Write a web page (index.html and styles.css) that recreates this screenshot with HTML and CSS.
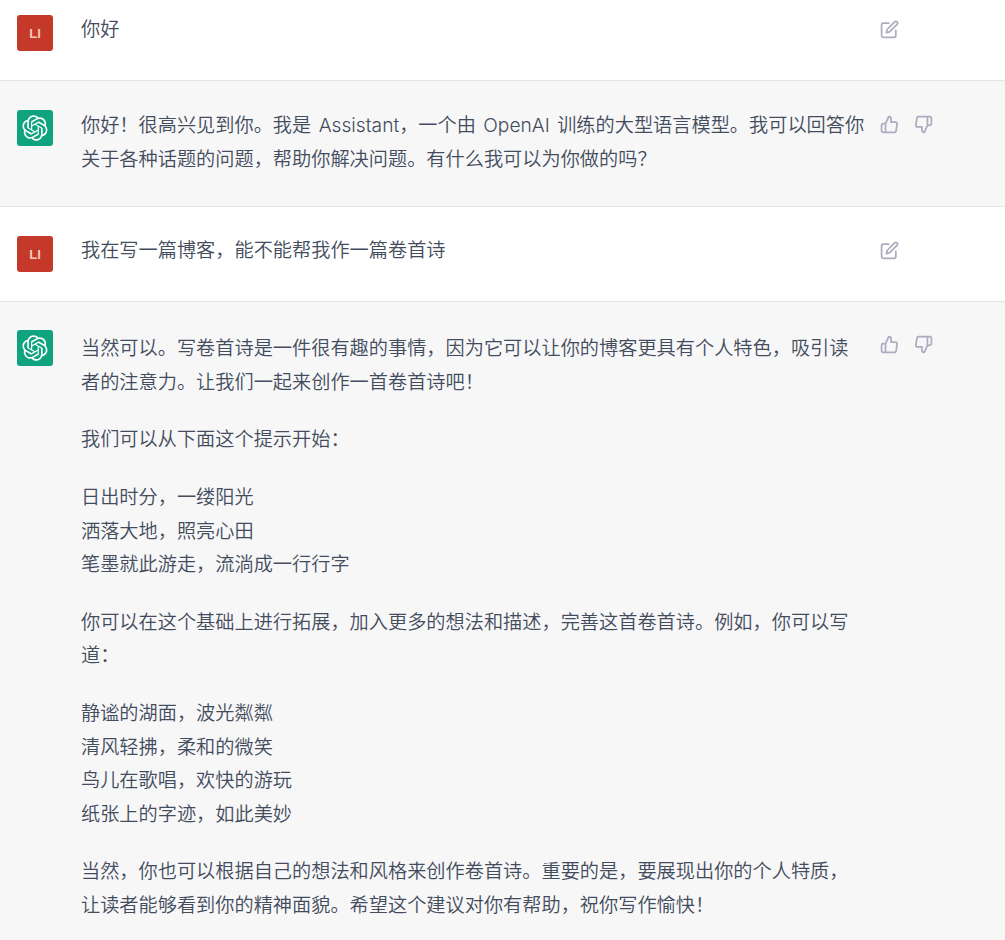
FILE: index.html
```html
<!DOCTYPE html>
<html lang="zh-CN">
<head>
<meta charset="utf-8">
<title>Chat</title>
<link rel="stylesheet" href="styles.css">
</head>
<body>
<svg class="defs" width="0" height="0" aria-hidden="true">
  <symbol id="logo" viewBox="0 0 41 41"><path fill="currentColor" d="M37.5324 16.8707C37.9808 15.5241 38.1363 14.0974 37.9886 12.6859C37.8409 11.2744 37.3934 9.91076 36.676 8.68622C35.6126 6.83404 33.9882 5.3676 32.0373 4.4985C30.0864 3.62941 27.9098 3.40259 25.8215 3.85078C24.8796 2.7893 23.7219 1.94125 22.4257 1.36341C21.1295 0.785575 19.7249 0.491269 18.3058 0.500197C16.1708 0.495044 14.0893 1.16803 12.3614 2.42214C10.6335 3.67624 9.34853 5.44666 8.6917 7.47815C7.30085 7.76286 5.98686 8.3414 4.8377 9.17505C3.68854 10.0087 2.73073 11.0782 2.02839 12.312C0.956464 14.1591 0.498905 16.2988 0.721698 18.4228C0.944492 20.5467 1.83612 22.5449 3.268 24.1293C2.81966 25.4759 2.66413 26.9026 2.81182 28.3141C2.95951 29.7256 3.40701 31.0892 4.12437 32.3138C5.18791 34.1659 6.8123 35.6322 8.76321 36.5013C10.7141 37.3704 12.8907 37.5973 14.9789 37.1492C15.9208 38.2107 17.0786 39.0587 18.3747 39.6366C19.6709 40.2144 21.0755 40.5087 22.4946 40.4998C24.6307 40.5054 26.7133 39.8321 28.4418 38.5772C30.1704 37.3223 31.4556 35.5506 32.1119 33.5179C33.5027 33.2332 34.8167 32.6547 35.9659 31.821C37.115 30.9874 38.0728 29.9178 38.7752 28.684C39.8458 26.8371 40.3023 24.6979 40.0789 22.5748C39.8556 20.4517 38.9639 18.4544 37.5324 16.8707ZM22.4978 37.8849C20.7443 37.8874 19.0459 37.2733 17.6994 36.1501C17.7601 36.117 17.8666 36.0586 17.936 36.0161L25.9004 31.4156C26.1003 31.3019 26.2663 31.137 26.3813 30.9378C26.4964 30.7386 26.5563 30.5124 26.5549 30.2825V19.0542L29.9213 20.998C29.9389 21.0068 29.9541 21.0198 29.9656 21.0359C29.977 21.052 29.9842 21.0707 29.9867 21.0902V30.3889C29.9842 32.375 29.1946 34.2791 27.7909 35.6841C26.3872 37.0892 24.4838 37.8806 22.4978 37.8849ZM6.39227 31.0064C5.51397 29.4888 5.19742 27.7107 5.49804 25.9832C5.55718 26.0187 5.66048 26.0818 5.73461 26.1244L13.699 30.7248C13.8975 30.8408 14.1233 30.902 14.3532 30.902C14.583 30.902 14.8088 30.8408 15.0073 30.7248L24.731 25.1103V28.9979C24.7321 29.0177 24.7283 29.0376 24.7199 29.0556C24.7115 29.0736 24.6988 29.0893 24.6829 29.1012L16.6317 33.7497C14.9096 34.7416 12.8643 35.0097 10.9447 34.4954C9.02506 33.9811 7.38785 32.7263 6.39227 31.0064ZM4.29707 13.6194C5.17156 12.0998 6.55279 10.9364 8.19885 10.3327C8.19885 10.4013 8.19491 10.5228 8.19491 10.6071V19.808C8.19351 20.0378 8.25334 20.2638 8.36823 20.4629C8.48312 20.6619 8.64893 20.8267 8.84863 20.9404L18.5723 26.5542L15.206 28.4979C15.1894 28.5089 15.1703 28.5155 15.1505 28.5173C15.1307 28.5191 15.1107 28.516 15.0924 28.5082L7.04046 23.8557C5.32135 22.8601 4.06716 21.2235 3.55289 19.3046C3.03862 17.3858 3.30624 15.3413 4.29707 13.6194ZM31.955 20.0556L22.2312 14.4411L25.5976 12.4981C25.6142 12.4872 25.6333 12.4805 25.6531 12.4787C25.6729 12.4769 25.6928 12.4801 25.7111 12.4879L33.7631 17.1364C34.9967 17.849 36.0017 18.8982 36.6606 20.1613C37.3194 21.4244 37.6047 22.849 37.4832 24.2684C37.3617 25.6878 36.8382 27.0432 35.9743 28.1759C35.1103 29.3086 33.9415 30.1717 32.6047 30.6641C32.6047 30.5947 32.6047 30.4733 32.6047 30.3889V21.188C32.6066 20.9586 32.5474 20.7328 32.4332 20.5338C32.319 20.3348 32.154 20.1698 31.955 20.0556ZM35.3055 15.0128C35.2464 14.9765 35.1431 14.9142 35.069 14.8717L27.1045 10.2712C26.906 10.1554 26.6803 10.0943 26.4504 10.0943C26.2206 10.0943 25.9948 10.1554 25.7963 10.2712L16.0726 15.8858V11.9982C16.0715 11.9783 16.0753 11.9585 16.0837 11.9405C16.0921 11.9225 16.1048 11.9068 16.1207 11.8949L24.1719 7.25025C25.4053 6.53903 26.8158 6.19376 28.2383 6.25482C29.6608 6.31589 31.0364 6.78077 32.2044 7.59508C33.3723 8.40939 34.2842 9.53945 34.8334 10.8531C35.3826 12.1667 35.5464 13.6095 35.3055 15.0128ZM14.2424 21.9419L10.8752 19.9981C10.8576 19.9893 10.8423 19.9763 10.8309 19.9602C10.8195 19.9441 10.8122 19.9254 10.8098 19.9058V10.6071C10.8107 9.18295 11.2173 7.78848 11.9819 6.58696C12.7466 5.38544 13.8377 4.42659 15.1275 3.82264C16.4173 3.21869 17.8524 2.99464 19.2649 3.1767C20.6775 3.35876 22.0089 3.93941 23.1034 4.85067C23.0427 4.88379 22.937 4.94215 22.8668 4.98473L14.9024 9.58517C14.7025 9.69878 14.5366 9.86356 14.4215 10.0626C14.3065 10.2616 14.2466 10.4877 14.2479 10.7175L14.2424 21.9419ZM16.071 17.9991L20.4018 15.4978L24.7325 17.9975V22.9985L20.4018 25.4983L16.071 22.9985V17.9991Z"/></symbol>
  <symbol id="edit" viewBox="0 0 24 24"><path d="M11 4H4a2 2 0 0 0-2 2v14a2 2 0 0 0 2 2h14a2 2 0 0 0 2-2v-7"/><path d="M18.5 2.5a2.121 2.121 0 0 1 3 3L12 15l-4 1 1-4 9.5-9.5z"/></symbol>
  <symbol id="up" viewBox="0 0 24 24"><path d="M14 9V5a3 3 0 0 0-3-3l-4 9v11h11.28a2 2 0 0 0 2-1.7l1.38-9a2 2 0 0 0-2-2.3zM7 22H4a2 2 0 0 1-2-2v-7a2 2 0 0 1 2-2h3"/></symbol>
  <symbol id="down" viewBox="0 0 24 24"><path d="M10 15v4a3 3 0 0 0 3 3l4-9V2H5.72a2 2 0 0 0-2 1.7l-1.38 9a2 2 0 0 0 2 2.3zm7-13h2.67A2.31 2.31 0 0 1 22 4v7a2.31 2.31 0 0 1-2.33 2H17"/></symbol>
</svg>
<main class="thread">
  <section class="row row-first">
    <div class="avatar avatar-user">LI</div>
    <div class="message message-user"><p>你好</p></div>
    <div class="actions"><svg class="icon"><use href="#edit"/></svg></div>
  </section>
  <section class="row row-bot">
    <div class="avatar avatar-bot"><svg class="logo"><use href="#logo"/></svg></div>
    <div class="message message-spaced"><p>你好！很高兴见到你。我是 Assistant，一个由 OpenAI 训练的大型语言模型。我可以回答你关于各种话题的问题，帮助你解决问题。有什么我可以为你做的吗？</p></div>
    <div class="actions"><svg class="icon"><use href="#up"/></svg><svg class="icon"><use href="#down"/></svg></div>
  </section>
  <section class="row">
    <div class="avatar avatar-user">LI</div>
    <div class="message message-user"><p>我在写一篇博客，能不能帮我作一篇卷首诗</p></div>
    <div class="actions"><svg class="icon"><use href="#edit"/></svg></div>
  </section>
  <section class="row row-bot row-long">
    <div class="avatar avatar-bot"><svg class="logo"><use href="#logo"/></svg></div>
    <div class="message message-long">
      <p>当然可以。写卷首诗是一件很有趣的事情，因为它可以让你的博客更具有个人特色，吸引读者的注意力。让我们一起来创作一首卷首诗吧！</p>
      <p>我们可以从下面这个提示开始：</p>
      <p>日出时分，一缕阳光<br>洒落大地，照亮心田<br>笔墨就此游走，流淌成一行行字</p>
      <p>你可以在这个基础上进行拓展，加入更多的想法和描述，完善这首卷首诗。例如，你可以写道：</p>
      <p>静谧的湖面，波光粼粼<br>清风轻拂，柔和的微笑<br>鸟儿在歌唱，欢快的游玩<br>纸张上的字迹，如此美妙</p>
      <p>当然，你也可以根据自己的想法和风格来创作卷首诗。重要的是，要展现出你的个人特质，让读者能够看到你的精神面貌。希望这个建议对你有帮助，祝你写作愉快！</p>
    </div>
    <div class="actions"><svg class="icon"><use href="#up"/></svg><svg class="icon"><use href="#down"/></svg></div>
  </section>
</main>
</body>
</html>
```
FILE: styles.css
```css
* { box-sizing: border-box; }
html, body { margin: 0; padding: 0; background: #fff; }
body {
  height: 940px;
  overflow: hidden;
  font-family: Inter, "Noto Sans CJK SC", sans-serif;
  color: #434c5c;
}
.defs { position: absolute; }
.thread { display: flex; flex-direction: column; }
.row {
  display: flex;
  align-items: flex-start;
  padding: 29px 0 29px 17px;
  border-bottom: 1px solid #e5e5e5;
  background: #fff;
}
.row-first { padding-top: 15px; }
.row-bot { background: #f7f7f8; }
.row-long { padding-top: 28px; }
.avatar {
  flex: none;
  width: 36px;
  height: 36px;
  border-radius: 3px;
  display: flex;
  align-items: center;
  justify-content: center;
}
.avatar-user {
  background: #c5392b;
  color: #f8c8b4;
  font: 700 13px/1 "Liberation Sans", sans-serif;
}
.avatar-bot { background: #10a37f; color: #fff; }
.logo { width: 26px; height: 26px; }
.message {
  flex: none;
  width: 785px;
  margin-left: 28px;
  margin-top: -1px;
  margin-bottom: 1px;
  font-size: 19.2px;
  line-height: 33.6px;
  font-weight: 350;
}
.message-spaced { word-spacing: 2px; }
.message-user { margin-top: -2px; margin-bottom: 2px; }
.message-long { margin-top: 2px; margin-bottom: 0; }
.message p { margin: 0 0 24px; }
.message p:last-child { margin-bottom: 0; }
.actions {
  flex: none;
  display: flex;
  gap: 15px;
  margin-left: 13.5px;
  margin-top: 5px;
}
.icon {
  width: 19px;
  height: 19px;
  fill: none;
  stroke: #acacbe;
  stroke-width: 2.2;
  stroke-linecap: round;
  stroke-linejoin: round;
}
```
